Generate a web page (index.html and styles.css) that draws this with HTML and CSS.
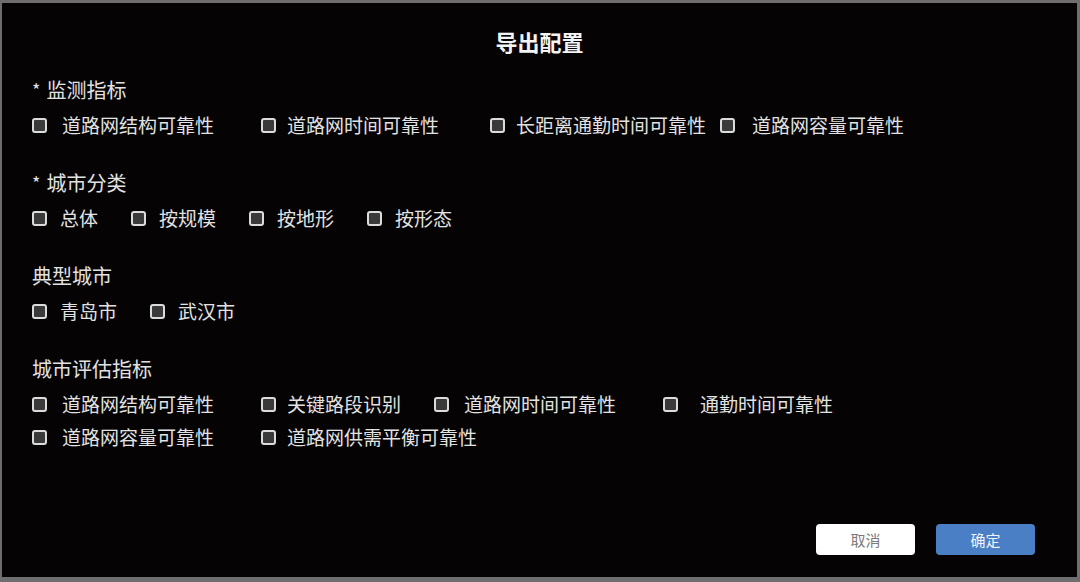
FILE: index.html
```html
<!DOCTYPE html>
<html lang="zh-CN">
<head>
<meta charset="utf-8">
<title>导出配置</title>
<link rel="stylesheet" href="styles.css">
</head>
<body>
<div class="dialog">
  <h1 class="title">导出配置</h1>
  <div class="sections">
    <section class="section">
      <div class="heading"><span class="star">*</span>监测指标</div>
      <div class="rows">
        <div class="row grid-monitor">
          <label class="item gap-md"><span class="box"></span>道路网结构可靠性</label>
          <label class="item gap-sm"><span class="box"></span>道路网时间可靠性</label>
          <label class="item gap-sm"><span class="box"></span>长距离通勤时间可靠性</label>
          <label class="item gap-lg"><span class="box"></span>道路网容量可靠性</label>
        </div>
      </div>
    </section>
    <section class="section">
      <div class="heading"><span class="star">*</span>城市分类</div>
      <div class="rows">
        <div class="row flex-row">
          <label class="item"><span class="box"></span>总体</label>
          <label class="item"><span class="box"></span>按规模</label>
          <label class="item"><span class="box"></span>按地形</label>
          <label class="item"><span class="box"></span>按形态</label>
        </div>
      </div>
    </section>
    <section class="section">
      <div class="heading">典型城市</div>
      <div class="rows">
        <div class="row flex-row">
          <label class="item"><span class="box"></span>青岛市</label>
          <label class="item"><span class="box"></span>武汉市</label>
        </div>
      </div>
    </section>
    <section class="section">
      <div class="heading">城市评估指标</div>
      <div class="rows">
        <div class="row grid-eval">
          <label class="item gap-md"><span class="box"></span>道路网结构可靠性</label>
          <label class="item gap-sm"><span class="box"></span>关键路段识别</label>
          <label class="item gap-md"><span class="box"></span>道路网时间可靠性</label>
          <label class="item gap-xl"><span class="box"></span>通勤时间可靠性</label>
        </div>
        <div class="row grid-eval">
          <label class="item gap-md"><span class="box"></span>道路网容量可靠性</label>
          <label class="item gap-sm"><span class="box"></span>道路网供需平衡可靠性</label>
        </div>
      </div>
    </section>
  </div>
  <div class="footer">
    <button class="btn btn-cancel">取消</button>
    <button class="btn btn-ok">确定</button>
  </div>
</div>
</body>
</html>
```
FILE: styles.css
```css
html, body {
  margin: 0;
  padding: 0;
  width: 1080px;
  height: 582px;
  overflow: hidden;
  background: #6e6e6e;
}
body {
  font-family: "Noto Sans CJK SC", "Noto Sans", sans-serif;
  color: #e2e2e2;
}
.dialog {
  box-sizing: border-box;
  margin: 3px 3px 0 2px;
  height: 574px;
  background: #050304;
  display: flex;
  flex-direction: column;
  padding: 23px 42px 22px 30px;
}
.title {
  margin: 0;
  text-align: center;
  font-size: 22px;
  line-height: 30px;
  font-weight: 700;
  color: #f4f4f4;
  padding-left: 12px;
}
.sections {
  margin-top: 22px;
  display: flex;
  flex-direction: column;
  gap: 34px;
}
.heading {
  font-size: 20px;
  line-height: 24px;
  height: 24px;
}
.star {
  display: inline-block;
  font-size: 18px;
  margin-right: 6px;
  vertical-align: top;
  line-height: 22px;
}
.rows {
  margin-top: 11px;
  display: flex;
  flex-direction: column;
  gap: 9px;
}
.row {
  height: 24px;
}
.grid-monitor {
  display: grid;
  grid-template-columns: 229px 229px 230px auto;
}
.grid-eval {
  display: grid;
  grid-template-columns: 229px 173px 229px auto;
}
.flex-row {
  display: flex;
  gap: 33px;
}
.item {
  display: flex;
  align-items: center;
  gap: 13px;
  font-size: 19px;
  line-height: 24px;
  white-space: nowrap;
}
.gap-sm { gap: 11px; }
.gap-md { gap: 15px; }
.gap-lg { gap: 17px; }
.gap-xl { gap: 22px; }
.box {
  box-sizing: border-box;
  width: 15px;
  height: 15px;
  flex: none;
  border: 2px solid #dcdcdc;
  border-radius: 3px;
  background: #3a3a3a;
}
.footer {
  margin-top: auto;
  display: flex;
  justify-content: flex-end;
  gap: 21px;
}
.btn {
  width: 99px;
  height: 31px;
  border: none;
  border-radius: 4px;
  font-family: "Noto Sans CJK SC", "Noto Sans", sans-serif;
  font-size: 15px;
  padding: 0;
}
.btn-cancel {
  background: #ffffff;
  color: #7a7a7a;
}
.btn-ok {
  background: #4a7fc6;
  color: #f0f4fa;
}
```
